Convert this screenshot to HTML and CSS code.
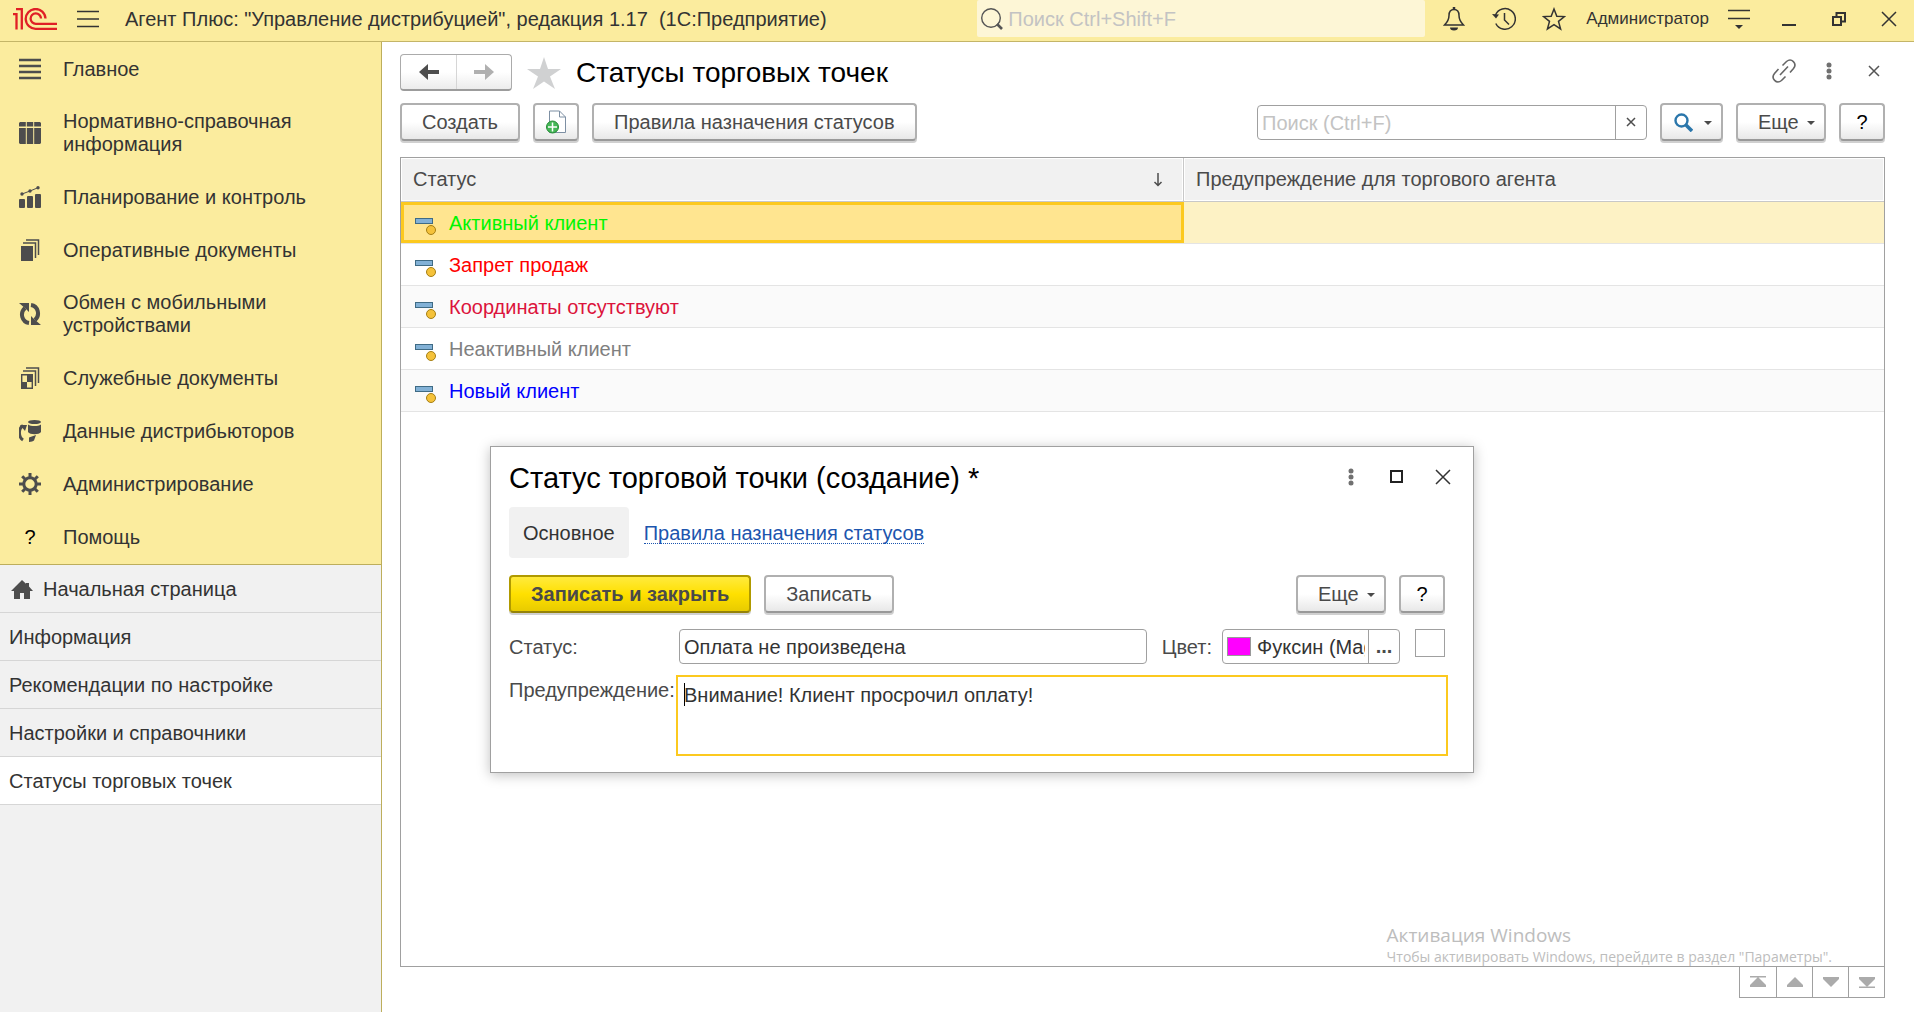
FILE: index.html
```html
<!DOCTYPE html>
<html lang="ru">
<head>
    <meta charset="utf-8">
    <meta name="viewport" content="width=device-width, initial-scale=1">
    <title>Статусы торговых точек</title>
    <link rel="stylesheet" href="styles.css">
</head>

<body>
<header class="topbar">
    <svg class="logo" width="44" height="22" viewBox="0 0 44 22" fill="none" stroke="#e01f26" stroke-width="2.300">
        <path d="M0 6.200h3.500v15.300M3 1.200h5.800v20.300"/>
        <path d="M32.500 10.500A9.900 9.900 0 1 0 23 20.800h21"/>
        <path d="M28 10.500A5.200 5.200 0 1 0 23 15.800h21"/>
    </svg>
    <button class="icon_btn main_menu" title="Меню">
        <svg width="22" height="18" viewBox="0 0 22 18" stroke="#333" stroke-width="1.400"><path d="M0 1.500h22M0 9h22M0 16.500h22"/></svg>
    </button>
    <div class="app_title">Агент Плюс: "Управление дистрибуцией", редакция 1.17&nbsp; (1С:Предприятие)</div>
    <label class="global_search">
        <svg width="22" height="22" viewBox="0 0 22 22" fill="none" stroke="#555"><circle cx="10" cy="10" r="9.300" stroke-width="1.400"/><path d="M16 16l5 5" stroke-width="2.600"/></svg>
        <input type="text" placeholder="Поиск Ctrl+Shift+F" aria-label="Глобальный поиск">
    </label>
    <button class="icon_btn" title="Оповещения">
        <svg width="22" height="24" viewBox="0 0 22 24" fill="none" stroke="#333" stroke-width="1.500"><path d="M11 2.500c-4 0-5 3-5 6 0 5-2 7-4.500 9.500h19c-2.500-2.500-4.500-4.500-4.500-9.500 0-3-1-6-5-6z"/><path d="M11 0v2.500" stroke-width="2.500"/><path d="M7 20.500h8a4 3 0 0 1-8 0z" fill="#333" stroke="none"/></svg>
    </button>
    <button class="icon_btn" title="История">
        <svg width="24" height="24" viewBox="0 0 24 24" fill="none" stroke="#333" stroke-width="1.500"><path d="M3.500 8a10.300 10.300 0 1 1 .300 8.500"/><path d="M12.500 6v7l4.500 4.500"/><path d="M0 7l7 .500-3 4z" fill="#333" stroke="none"/></svg>
    </button>
    <button class="icon_btn" title="Избранное">
        <svg width="24" height="24" viewBox="0 0 24 24" fill="none" stroke="#333" stroke-width="1.500"><path d="M12 2l2.800 7.200 7.700.400-6 4.800 2.100 7.600-6.600-4.300L5.400 22l2.100-7.600-6-4.800 7.700-.400z"/></svg>
    </button>
    <span class="user">Администратор</span>
    <button class="icon_btn" title="Сервис">
        <svg width="22" height="22" viewBox="0 0 22 22" stroke="#333" stroke-width="1.400"><path d="M0 2.500h22M0 10.500h22"/><path d="M7 17h8l-4 4z" fill="#333" stroke="none"/></svg>
    </button>
    <button class="icon_btn" title="Свернуть">
        <svg width="14" height="14" viewBox="0 0 14 14" stroke="#333" stroke-width="2"><path d="M0 13h14"/></svg>
    </button>
    <button class="icon_btn" title="Восстановить">
        <svg width="14" height="14" viewBox="0 0 14 14" fill="none" stroke="#333" stroke-width="2"><path d="M1 5h8v8H1zM4.500 4V1H13v8.500h-3"/></svg>
    </button>
    <button class="icon_btn" title="Закрыть">
        <svg width="16" height="16" viewBox="0 0 16 16" stroke="#333" stroke-width="1.500"><path d="M1 1l14 14M15 1L1 15"/></svg>
    </button>
</header>

<div class="workspace">
    <aside class="sidebar">
        <nav class="sections">
            <a href="#">
                <svg width="22" height="22" viewBox="0 0 22 22" stroke="#4d4d4d" stroke-width="2.600"><path d="M0 2h22M0 8h22M0 14h22M0 20h22"/></svg>
                <span>Главное</span>
            </a>
            <a href="#">
                <svg width="22" height="22" viewBox="0 0 22 22" fill="#4d4d4d"><path d="M1 0h5.800v4.500H0V1zM7.800 0h6.400v4.500H7.800zM15.200 0H21l1 1v3.500h-6.800zM0 6h6.800v16H1l-1-1zM7.800 6h6.400v16H7.800zM15.200 6H22v15l-1 1h-5.800z"/></svg>
                <span>Нормативно-справочная информация</span>
            </a>
            <a href="#">
                <svg width="22" height="22" viewBox="0 0 22 22" fill="#4d4d4d"><rect x="0" y="13" width="6" height="9" rx="1"/><rect x="8" y="10" width="6" height="12" rx="1"/><rect x="16" y="8" width="6" height="14" rx="1"/><circle cx="3" cy="8" r="1.700"/><circle cx="11" cy="5" r="1.700"/><circle cx="19" cy="1.700" r="1.700"/><path d="M3 8l8-3 8-3.300" fill="none" stroke="#4d4d4d"/></svg>
                <span>Планирование и контроль</span>
            </a>
            <a href="#">
                <svg width="22" height="22" viewBox="0 0 22 22"><path d="M2 7h12v15H2z" fill="#4d4d4d"/><path d="M4 4h12.500v15M7 1h12.500v15" fill="none" stroke="#4d4d4d" stroke-width="1.500"/></svg>
                <span>Оперативные документы</span>
            </a>
            <a href="#">
                <svg width="22" height="22" viewBox="0 0 22 22"><path d="M10 20C3 19 .500 10 6 5M12 2c7 1 9.500 10 4 15" fill="none" stroke="#4d4d4d" stroke-width="4"/><path d="M0 0h10v9L7 6zM22 22H12v-9l3 3z" fill="#4d4d4d"/></svg>
                <span>Обмен с мобильными устройствами</span>
            </a>
            <a href="#">
                <svg width="22" height="22" viewBox="0 0 22 22"><path d="M2.700 7.700h10.600v13.600H2.700z" fill="none" stroke="#4d4d4d" stroke-width="1.400"/><path d="M8 8h5.500v7H8zM2.500 15H8v6.500H2.500z" fill="#4d4d4d"/><path d="M4 4h12.500v15M7 1h12.500v15" fill="none" stroke="#4d4d4d" stroke-width="1.500"/></svg>
                <span>Служебные документы</span>
            </a>
            <a href="#">
                <svg width="22" height="22" viewBox="0 0 22 22"><path d="M4 20C-.500 17-1 9 4 5.500" fill="none" stroke="#4d4d4d" stroke-width="3"/><path d="M1 5h7L6 11zM17 15l-2 5.500c-1 .500-2.500 1.500-5 1.500v-4.500z" fill="#4d4d4d"/><ellipse cx="15.500" cy="2" rx="6.500" ry="2" fill="#4d4d4d"/><path d="M9 4.500c3 2 10 2 13 0V12c-2 3-11 3-13 0z" fill="#4d4d4d"/></svg>
                <span>Данные дистрибьюторов</span>
            </a>
            <a href="#">
                <svg width="22" height="22" viewBox="0 0 22 22" fill="none" stroke="#4d4d4d"><circle cx="11" cy="11" r="6.200" stroke-width="3"/><path d="M11 0v4M11 18v4M0 11h4M18 11h4M3.200 3.200l3 3M15.800 15.800l3 3M3.200 18.800l3-3M15.800 6.200l3-3" stroke-width="3"/></svg>
                <span>Администрирование</span>
            </a>
            <a href="#">
                <b class="q">?</b>
                <span>Помощь</span>
            </a>
        </nav>
        <nav class="open_tabs">
            <a href="#" class="home">
                <svg width="22" height="20" viewBox="0 0 22 20" fill="#4d4d4d"><path d="M11 0l4 3.700V3h3v3.500l4 4.500h-3v8h-6v-6H9v6H3v-8H0z"/></svg>
                Начальная страница
            </a>
            <a href="#">Информация</a>
            <a href="#">Рекомендации по настройке</a>
            <a href="#">Настройки и справочники</a>
            <a href="#" class="current">Статусы торговых точек</a>
        </nav>
    </aside>

    <main class="page">
        <div class="page_head">
            <div class="history_nav">
                <button title="Назад"><svg width="20" height="16" viewBox="0 0 20 16" fill="#4d4d4d"><path d="M0 8l9-8v6h11v4H9v6z"/></svg></button>
                <button title="Вперед"><svg width="20" height="16" viewBox="0 0 20 16" fill="#b0b0b0"><path d="M20 8l-9-8v6H0v4h11v6z"/></svg></button>
            </div>
            <svg class="fav" width="34" height="32" viewBox="0 0 34 32" fill="#d0d1d2"><path d="M17 0l4 12h13l-11 7.500L28 32l-11-7.500L6 32l5-12.500L0 12h13z"/></svg>
            <h1>Статусы торговых точек</h1>
            <div class="page_tools">
                <button class="icon_btn" title="Получить ссылку">
                    <svg width="24" height="24" viewBox="0 0 24 24" fill="none" stroke="#666" stroke-width="1.600"><path d="M10.500 6.500l4-4c5-4 11 2 7 7l-3.500 4M6.500 10l-4 4.500c-4 5 2 11 7 7l4-4M8 16l8-8.500"/></svg>
                </button>
                <button class="icon_btn" title="Еще">
                    <svg width="6" height="18" viewBox="0 0 6 18" fill="#707070"><circle cx="3" cy="3" r="2.500"/><circle cx="3" cy="9" r="2.500"/><circle cx="3" cy="15" r="2.500"/></svg>
                </button>
                <button class="icon_btn" title="Закрыть">
                    <svg width="12" height="12" viewBox="0 0 12 12" stroke="#555" stroke-width="1.500"><path d="M1 1l10 10M11 1L1 11"/></svg>
                </button>
            </div>
        </div>

        <div class="commands">
            <button class="btn">Создать</button>
            <button class="btn small" title="Создать копированием">
                <svg width="22" height="24" viewBox="0 0 22 24"><path d="M4.500 1h10l6 6v15.500h-16z" fill="#fff" stroke="#7d8fa3"/><path d="M14.500 1v6h6" fill="none" stroke="#7d8fa3"/><circle cx="7.500" cy="17" r="6" fill="#45b757" stroke="#248a35"/><path d="M7.500 12.500v9M3 17h9" stroke="#fff" stroke-width="1.500"/></svg>
            </button>
            <button class="btn">Правила назначения статусов</button>
            <div class="list_search">
                <input type="text" placeholder="Поиск (Ctrl+F)" aria-label="Поиск по списку">
                <button title="Очистить"><svg width="10" height="10" viewBox="0 0 10 10" stroke="#4d4d4d" stroke-width="1.500"><path d="M1 1l8 8M9 1L1 9"/></svg></button>
            </div>
            <button class="btn find" title="Найти">
                <svg width="19" height="19" viewBox="0 0 19 19" fill="none" stroke="#2a76ab"><circle cx="7.500" cy="7.500" r="6" stroke-width="2.400"/><path d="M12 12l6 6" stroke-width="3.600"/></svg>
                <i class="caret"></i>
            </button>
            <button class="btn more">Еще <i class="caret"></i></button>
            <button class="btn small help">?</button>
        </div>

        <div class="list">
            <table>
                <thead>
                    <tr>
                        <th class="col_status"><div class="th_in">Статус
                            <svg width="10" height="14" viewBox="0 0 10 14" fill="none" stroke="#4d4d4d" stroke-width="1.500"><path d="M5 0v12M1.500 9L5 12.500 8.500 9"/></svg></div></th>
                        <th>Предупреждение для торгового агента</th>
                    </tr>
                </thead>
                <tbody>
                    <tr class="selected"><td><span class="item active"><i class="mark"></i>Активный клиент</span></td><td></td></tr>
                    <tr><td><span class="item banned"><i class="mark"></i>Запрет продаж</span></td><td></td></tr>
                    <tr><td><span class="item nocoord"><i class="mark"></i>Координаты отсутствуют</span></td><td></td></tr>
                    <tr><td><span class="item inactive"><i class="mark"></i>Неактивный клиент</span></td><td></td></tr>
                    <tr><td><span class="item new"><i class="mark"></i>Новый клиент</span></td><td></td></tr>
                </tbody>
            </table>
        </div>
        <div class="pager">
            <button title="В начало"><svg width="16" height="12" viewBox="0 0 16 12" fill="#ababab"><path d="M0 0h16v1.500H0zM8 1l8 8v2H0V9z"/></svg></button>
            <button title="Вверх"><svg width="16" height="12" viewBox="0 0 16 12" fill="#ababab"><path d="M8 1l8 8v2H0V9z"/></svg></button>
            <button title="Вниз"><svg width="16" height="12" viewBox="0 0 16 12" fill="#ababab"><path d="M8 11l8-8V1H0v2z"/></svg></button>
            <button title="В конец"><svg width="16" height="12" viewBox="0 0 16 12" fill="#ababab"><path d="M0 10.500h16V12H0zM8 11l8-8V1H0v2z"/></svg></button>
        </div>

        <div class="watermark">
            <p class="wm_title">Активация Windows</p>
            <p class="wm_text">Чтобы активировать Windows, перейдите в раздел "Параметры".</p>
        </div>

        <section class="dialog" role="dialog" aria-labelledby="dialog_title">
            <div class="dialog_head">
                <h2 id="dialog_title">Статус торговой точки (создание) *</h2>
                <button class="icon_btn" title="Еще">
                    <svg width="6" height="18" viewBox="0 0 6 18" fill="#707070"><circle cx="3" cy="3" r="2.500"/><circle cx="3" cy="9" r="2.500"/><circle cx="3" cy="15" r="2.500"/></svg>
                </button>
                <button class="icon_btn" title="Развернуть">
                    <svg width="14" height="14" viewBox="0 0 14 14" fill="none" stroke="#222" stroke-width="2"><path d="M1 1h11v11H1z"/></svg>
                </button>
                <button class="icon_btn" title="Закрыть">
                    <svg width="16" height="16" viewBox="0 0 16 16" stroke="#333" stroke-width="1.500"><path d="M1 1l14 14M15 1L1 15"/></svg>
                </button>
            </div>
            <div class="dialog_body">
                <div class="dialog_tabs">
                    <span class="tab">Основное</span>
                    <a href="#">Правила назначения статусов</a>
                </div>
                <div class="dialog_cmd">
                    <button class="btn primary">Записать и закрыть</button>
                    <button class="btn">Записать</button>
                    <button class="btn more">Еще <i class="caret"></i></button>
                    <button class="btn small help">?</button>
                </div>
                <div class="form">
                    <label for="status">Статус:</label>
                    <div class="form_row">
                        <input type="text" id="status" class="field" value="Оплата не произведена">
                        <label for="color">Цвет:</label>
                        <div class="color_field">
                            <i class="swatch"></i>
                            <input type="text" id="color" value="Фуксин (Magenta)">
                            <button title="Выбрать">...</button>
                        </div>
                        <input type="checkbox" class="preview" aria-label="Образец цвета">
                    </div>
                    <label for="warning" class="top">Предупреждение:</label>
                    <textarea id="warning">Внимание! Клиент просрочил оплату!</textarea>
                </div>
            </div>
        </section>
    </main>
</div>
</body>
</html>
```

FILE: styles.css
```css
*, *::before, *::after {box-sizing: border-box;}
body {margin: 0;height: 100vh;display: flex;flex-direction: column;overflow: hidden;background: #fff;color: #333;font: 20px/23px "Liberation Sans", Arial, sans-serif;}
button, input, textarea {font: inherit;color: inherit;margin: 0;}
a {color: inherit;text-decoration: none;}
h1, h2, p {margin: 0;font-weight: normal;}
svg {display: block;flex: none;}
.icon_btn {width: 46px;height: 36px;padding: 0;border: 0;background: none;display: flex;align-items: center;justify-content: center;flex: none;}

/* верхняя панель */
.topbar {height: 42px;flex: none;display: flex;align-items: center;padding: 0 0 4px 13px;background: #fbec9e;border-bottom: 1px solid #c4b568;}
.topbar .icon_btn {width: 50px;}
.topbar .main_menu {margin-left: 6px;}
.app_title {flex: 1;padding: 2px 0 0 12px;white-space: nowrap;overflow: hidden;}
.global_search {display: flex;align-items: center;gap: 5px;width: 448px;height: 37px;padding: 0 4px;margin-right: 4px;background: #fdf6d6;border-radius: 2px;}
.global_search input {flex: 1;min-width: 0;border: 0;padding: 2px 0 0;background: none;outline: none;}
input::placeholder {color: #c3c3c3;opacity: 1;}
.user {font-size: 17px;padding: 0 5px 0 7px;}

.workspace {flex: 1;display: flex;min-height: 0;}

/* разделы */
.sidebar {width: 382px;flex: none;background: #f1f1f1;border-right: 1px solid #bdae5c;}
.sections {background: #fbec9e;border-bottom: 1px solid #bdae5c;padding-bottom: 1px;}
.sections a {display: flex;align-items: center;gap: 22px;min-height: 53px;padding: 15px 60px 14px 19px;}
.sections a span {flex: 1;}
.sections svg, .q {width: 22px;flex: none;}
.q {text-align: center;font-weight: normal;color: #000;}
.open_tabs a {display: flex;align-items: center;height: 48px;padding: 2px 9px 0;border-bottom: 1px solid #d6d6d6;}
.open_tabs .home {gap: 10px;padding-left: 11px;}
.open_tabs .current {background: #fff;}

/* форма списка */
.page {flex: 1;min-width: 0;position: relative;display: flex;flex-direction: column;padding: 12px 29px 14px 18px;}
.page_head {display: flex;align-items: center;margin-bottom: 12px;}
.history_nav {display: flex;height: 37px;border: 1px solid #ababab;border-bottom: 2px solid #9c9c9c;border-radius: 4px;background: linear-gradient(#fff 50%, #ececec);}
.history_nav button {width: 55px;padding: 0;border: 0;background: none;display: flex;align-items: center;justify-content: center;}
.history_nav button + button {border-left: 1px solid #d6d6d6;}
.fav {margin: 0 15px;}
h1 {flex: 1;font-size: 28px;line-height: 32px;color: #000;}
.page_tools {display: flex;margin-right: -11px;padding-bottom: 3px;align-self: flex-start;}
.page_tools .icon_btn {width: 45px;height: 34px;}

.commands, .dialog_cmd {display: flex;align-items: center;gap: 13px;margin-bottom: 16px;}
.btn {height: 38px;padding: 0 20px;border: 2px solid #b0b0b0;border-bottom-color: #999;border-radius: 4px;background: linear-gradient(#fff 50%, #e8e8e8);box-shadow: 0 2px 0 #d0d0d0;color: #4a4a4a;white-space: nowrap;display: flex;align-items: center;justify-content: center;flex: none;}
.btn.small {width: 46px;padding: 0;}
.btn.help {color: #000;}
.btn.more {width: 90px;padding: 0 9px 0 20px;justify-content: space-between;}
.btn.find {width: 63px;padding: 0 9px 0 12px;justify-content: space-between;}
.btn.primary {font-weight: bold;border-color: #b09a00;border-bottom-color: #94820a;background: linear-gradient(#ffea3d, #ffe000 50%, #e8cb00);}
.caret {margin-top: 2px;border: 4px solid transparent;border-top-color: #4a4a4a;border-bottom: 0;}
.list_search {display: flex;width: 390px;height: 35px;margin-left: auto;border: 1px solid #a0a0a0;border-radius: 4px;}
.list_search input {flex: 1;min-width: 0;border: 0;padding: 2px 4px 0;background: none;outline: none;}
.list_search button {width: 31px;padding: 0;border: 0;border-left: 1px solid #a0a0a0;background: none;display: flex;align-items: center;justify-content: center;}

.list {flex: 1;min-height: 0;border: 1px solid #a0a0a0;}
.list table {width: 100%;border-collapse: separate;border-spacing: 0;table-layout: fixed;}
.list th {height: 44px;padding: 0 12px;background: #f1f1f1;border-bottom: 1px solid #c8c8c8;box-shadow: inset 0 0 0 1px #fff;text-align: left;font-weight: normal;color: #4a4a4a;}
.list th.col_status {width: 783px;border-right: 1px solid #c8c8c8;padding: 0 20px 0 12px;}
.th_in {display: flex;align-items: center;justify-content: space-between;}
.list td {height: 42px;padding: 2px 14px 0;border-bottom: 1px solid #e4e4e4;}
.list tbody tr:nth-child(odd) td {background: #fafafa;}
.list tbody tr.selected:first-child td {background: #fdf2c5;}
.list tbody tr.selected:first-child td:first-child {background: #ffe590;box-shadow: inset 0 0 0 3px #fcc91f;}
.item {display: flex;align-items: center;gap: 13px;}
.mark {position: relative;width: 21px;height: 18px;}
.mark::before {content: "";position: absolute;left: 0;top: 3px;width: 18px;height: 6px;background: #82b1d6;border: 1px solid #3f6b85;}
.mark::after {content: "";position: absolute;right: 0;top: 10px;width: 10px;height: 10px;background: #f5c23a;border: 1px solid #a67f14;border-radius: 50%;}
.active {color: #00f500;}
.banned {color: #f00;}
.nocoord {color: #dc143c;}
.inactive {color: #808080;}
.new {color: #00f;}

.pager {display: flex;align-self: flex-end;margin-top: -1px;border: 1px solid #a0a0a0;}
.pager button {width: 36px;height: 30px;padding: 0;border: 0;background: #fff;display: flex;align-items: center;justify-content: center;}
.pager button + button {border-left: 1px solid #a0a0a0;}

.watermark {position: absolute;right: 82px;bottom: 45px;color: #bdbdbd;font-family: "Open Sans", sans-serif;white-space: nowrap;pointer-events: none;}
.wm_title {font-size: 19px;line-height: 24px;}
.wm_text {font-size: 14px;line-height: 20px;}

/* окно создания */
.dialog {position: absolute;left: 108px;top: 404px;width: 984px;background: #fff;border: 1px solid #a0a0a0;box-shadow: 0 2px 12px rgba(0,0,0,.25);}
.dialog_head {display: flex;align-items: center;height: 60px;padding: 0 7px 0 18px;}
h2 {flex: 1;padding-top: 2px;font-size: 29px;line-height: 32px;color: #000;}
.dialog_body {padding: 0 28px 19px 18px;}
.dialog_tabs {display: flex;align-items: center;gap: 15px;margin-bottom: 17px;}
.tab {padding: 15px 14px 13px;background: #f1f1f1;border-radius: 4px;}
.dialog_tabs a {padding-top: 2px;color: #1c55ae;line-height: 20px;border-bottom: 1px dotted #1c55ae;}
.dialog_cmd .more {margin-left: auto;}
.form {display: grid;grid-template-columns: 170px 1fr;row-gap: 14px;align-items: center;color: #4a4a4a;}
.form label {padding-top: 2px;}
.form_row {display: flex;align-items: center;gap: 15px;}
.form input, .form textarea {color: #333;}
.field {flex: 1;min-width: 0;height: 35px;padding: 2px 4px 0;border: 1px solid #a0a0a0;border-radius: 4px;}
.form_row label {margin-right: -5px;}
.color_field {display: flex;align-items: center;width: 178px;height: 35px;padding-left: 4px;border: 1px solid #a0a0a0;border-radius: 4px;}
.swatch {width: 24px;height: 19px;background: #f0f;border: 1px solid #999;flex: none;}
.color_field input {flex: 1;min-width: 0;margin: 0 3px 0 6px;border: 0;padding: 2px 0 0;outline: none;}
.color_field button {width: 31px;height: 100%;padding: 0;border: 0;border-left: 1px solid #a0a0a0;background: none;font-weight: bold;}
.preview {appearance: none;align-self: flex-start;width: 30px;height: 28px;border: 1px solid #a0a0a0;background: #fff;}
.form .top {align-self: start;padding-top: 1px;}
.form textarea {display: block;width: 100%;height: 75px;padding: 6px 5px;border: 0;outline: 2px solid #fcc91f;outline-offset: 1px;resize: none;background: linear-gradient(#000, #000) no-repeat 5px 5px / 1px 23px;}
```
